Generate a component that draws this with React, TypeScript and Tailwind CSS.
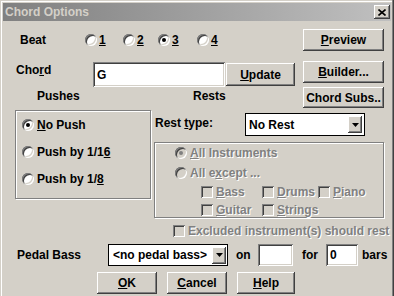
import type { ReactNode } from "react";

const raised =
  "shadow-[inset_-1px_-1px_0_#404040,inset_1px_1px_0_#fff,inset_-2px_-2px_0_#808080,inset_2px_2px_0_#d4d0c8]";
const sunken =
  "shadow-[inset_1px_1px_0_#808080,inset_-1px_-1px_0_#fff,inset_2px_2px_0_#404040,inset_-2px_-2px_0_#d4d0c8]";
const dim = "text-[#808080] [text-shadow:1px_1px_0_#fff]";

function U({ children }: { children: ReactNode }) {
  return <span className="underline underline-offset-[1px]">{children}</span>;
}

function Btn({ children, className }: { children: ReactNode; className: string }) {
  return (
    <div className={`flex shrink-0 items-center justify-center bg-[#d4d0c8] ${raised} ${className}`}>
      {children}
    </div>
  );
}

function Radio({ checked, disabled }: { checked?: boolean; disabled?: boolean }) {
  return (
    <span
      className={`flex h-[12px] w-[12px] shrink-0 items-center justify-center rounded-full ${
        disabled ? "bg-[#d4d0c8]" : "bg-white"
      } ${sunken}`}
    >
      {checked && (
        <span className={`h-[4px] w-[4px] rounded-full ${disabled ? "bg-[#808080]" : "bg-black"}`} />
      )}
    </span>
  );
}

function Check({ children, className }: { children: ReactNode; className: string }) {
  return (
    <div className={`flex items-center gap-[3px] ${className}`}>
      <span className={`h-[12px] w-[12px] shrink-0 bg-[#d4d0c8] ${sunken}`} />
      <span className={dim}>{children}</span>
    </div>
  );
}

function Arrow({ className }: { className: string }) {
  return (
    <div className={`flex shrink-0 items-center justify-center bg-[#d4d0c8] ${raised} ${className}`}>
      <svg width="7" height="4" viewBox="0 0 7 4">
        <path d="M0 0h7L3.5 4z" fill="#000" />
      </svg>
    </div>
  );
}

export default function App() {
  return (
    <div className="relative h-[296px] w-[394px] overflow-hidden bg-[#d4d0c8] font-['Liberation_Sans',Arial,sans-serif] text-[12px] font-bold leading-[14px] text-black shadow-[inset_-1px_0_0_#404040,inset_-2px_0_0_#808080,inset_1px_1px_0_#d4d0c8,inset_2px_2px_0_#fff]">
      {/* Title bar */}
      <div className="mx-[3px] mt-[3px] flex h-[18px] items-center bg-linear-to-r from-[#808080] to-[#c0c0c0]">
        <span className="pl-[2px] text-[12px] text-[#d4d0c8]">Chord Options</span>
        <div className={`ml-auto mr-[1px] flex h-[14px] w-[16px] items-center justify-center bg-[#d4d0c8] ${raised}`}>
          <svg width="8" height="7" viewBox="0 0 8 7">
            <path d="M0.5 0.5l7 6M7.5 0.5l-7 6" stroke="#000" strokeWidth="1.6" />
          </svg>
        </div>
      </div>

      {/* Beat */}
      <div className="mt-[8px] flex h-[22px] items-center">
        <span className="ml-[20px] w-[65px]">Beat</span>
        <div className="flex w-[38px] items-center gap-[2px]">
          <Radio />
          <U>1</U>
        </div>
        <div className="flex w-[35px] items-center gap-[2px]">
          <Radio />
          <U>2</U>
        </div>
        <div className="flex w-[39px] items-center gap-[2px]">
          <Radio checked />
          <U>3</U>
        </div>
        <div className="flex w-[106px] items-center gap-[2px]">
          <Radio />
          <U>4</U>
        </div>
        <Btn className="h-[22px] w-[81px]">
          <U>P</U>review
        </Btn>
      </div>

      {/* Chord */}
      <div className="mt-[10px] flex h-[26px] items-start">
        <span className="ml-[16px] mt-[2px] w-[77px]">
          Cho<U>r</U>d
        </span>
        <div className={`mt-[1px] flex h-[25px] w-[132px] items-center bg-white pl-[4px] ${sunken}`}>G</div>
        <Btn className="ml-[1px] mt-[2px] h-[23px] w-[69px]">
          <U>U</U>pdate
        </Btn>
        <Btn className="ml-[8px] h-[22px] w-[81px]">
          <U>B</U>uilder...
        </Btn>
      </div>

      {/* Pushes / Rests headings */}
      <div className="flex h-[21px] items-start">
        <span className="ml-[37px] mt-[2px] w-[156px]">Pushes</span>
        <span className="mt-[2px] w-[110px]">Rests</span>
        <Btn className="h-[21px] w-[81px]">Chord Subs..</Btn>
      </div>

      <div className="mt-[2px] flex items-start">
        {/* Pushes group */}
        <div className="ml-[15px] h-[89px] w-[136px] border border-[#808080] pl-[6px] shadow-[inset_1px_1px_0_#fff,1px_1px_0_#fff]">
          <div className="flex h-[27px] items-center gap-[3px]">
            <Radio checked />
            <span>
              <U>N</U>o Push
            </span>
          </div>
          <div className="flex h-[27px] items-center gap-[3px]">
            <Radio />
            <span>
              Push by 1/1<U>6</U>
            </span>
          </div>
          <div className="flex h-[27px] items-center gap-[3px]">
            <Radio />
            <span>
              Push by 1/<U>8</U>
            </span>
          </div>
        </div>

        {/* Rests */}
        <div className="ml-[3px] w-[230px]">
          <div className="mt-[3px] flex h-[23px] items-start">
            <span className="ml-[1px] mt-[3px] w-[90px]">
              Rest <U>t</U>ype:
            </span>
            <div className="flex h-[23px] w-[120px] items-center border border-black bg-white pl-[3px]">
              <span className="flex-1">No Rest</span>
              <Arrow className="mr-[2px] h-[17px] w-[14px]" />
            </div>
          </div>
          <div className="mt-[6px] h-[76px] w-[230px] border border-[#808080] shadow-[inset_1px_1px_0_#fff,1px_1px_0_#fff]">
            <div className="flex h-[20px] items-center gap-[3px] pl-[20px]">
              <Radio checked disabled />
              <span className={dim}>
                <U>A</U>ll Instruments
              </span>
            </div>
            <div className="flex h-[20px] items-center gap-[3px] pl-[20px]">
              <Radio disabled />
              <span className={dim}>
                All e<U>x</U>cept ...
              </span>
            </div>
            <div className="flex h-[17px] items-center pl-[46px]">
              <Check className="w-[61px]">
                <U>B</U>ass
              </Check>
              <Check className="w-[56px]">
                <U>D</U>rums
              </Check>
              <Check className="">
                <U>P</U>iano
              </Check>
            </div>
            <div className="flex h-[19px] items-center pl-[46px]">
              <Check className="w-[61px]">
                <U>G</U>uitar
              </Check>
              <Check className="">
                <U>S</U>trings
              </Check>
            </div>
          </div>
        </div>
      </div>

      {/* Excluded */}
      <div className="mt-[6px] flex h-[14px] items-center">
        <Check className="ml-[173px]">Excluded instrument(s) should rest</Check>
      </div>

      {/* Pedal bass */}
      <div className="mt-[6px] flex h-[22px] items-center">
        <span className="ml-[17px] w-[91px]">Pedal Bass</span>
        <div className="flex h-[22px] w-[120px] items-center border border-black bg-white pl-[4px]">
          <span className="flex-1">&lt;no pedal bass&gt;</span>
          <Arrow className="mr-[1px] h-[17px] w-[14px]" />
        </div>
        <span className="ml-[8px] w-[22px]">on</span>
        <div className={`h-[22px] w-[35px] bg-white ${sunken}`} />
        <span className="ml-[9px] w-[24px]">for</span>
        <div className={`flex h-[22px] w-[32px] items-center bg-white pl-[4px] ${sunken}`}>0</div>
        <span className="ml-[4px]">bars</span>
      </div>

      {/* Buttons */}
      <div className="mt-[6px] flex h-[22px] items-center">
        <Btn className="ml-[97px] h-[22px] w-[60px]">
          <U>O</U>K
        </Btn>
        <Btn className="ml-[10px] h-[22px] w-[60px]">
          <U>C</U>ancel
        </Btn>
        <Btn className="ml-[10px] h-[22px] w-[58px]">
          <U>H</U>elp
        </Btn>
      </div>
    </div>
  );
}
